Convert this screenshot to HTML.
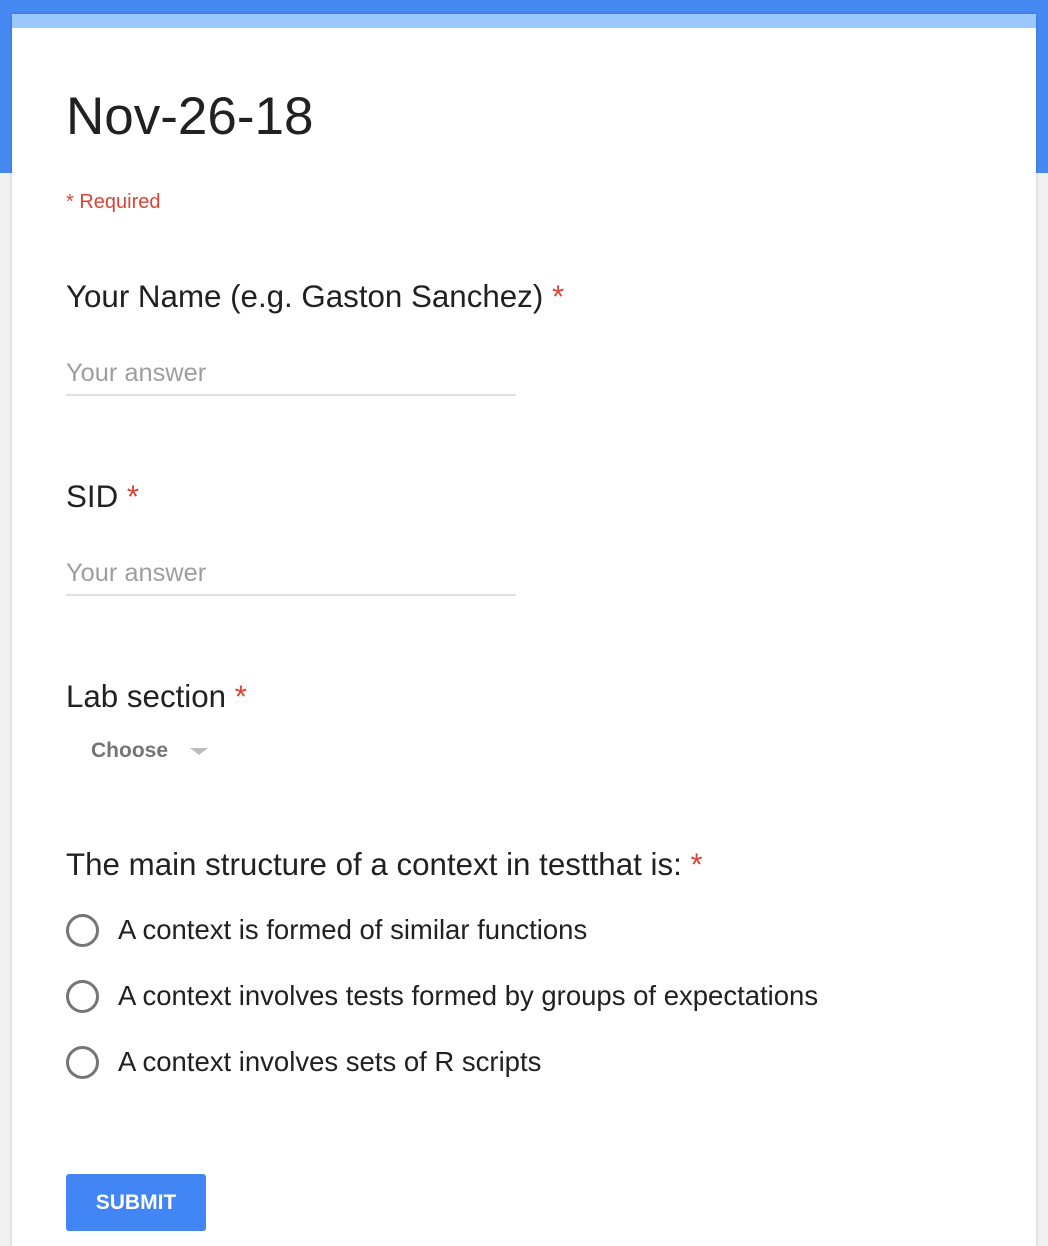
<!DOCTYPE html>
<html><head><style>
html,body{margin:0;height:1246px;overflow:hidden}
body{width:1048px;background:#f0f0f0;font-family:"Liberation Sans",Arial,sans-serif;position:relative}
.band{position:absolute;left:0;top:0;width:1048px;height:173px;background:#4688f1}
.card{position:absolute;left:12px;top:14px;width:1024px;height:1232px;background:#fff;border-top:14px solid #9bc8fc;box-shadow:0 0 3px rgba(0,0,0,.2);box-sizing:border-box}
.t{position:absolute;white-space:nowrap;color:#212121}
.r{color:#db4437}
.line{position:absolute;left:66px;width:450px;height:2px;background:#e0e0e0}
.ph{position:absolute;left:66px;font-size:25.4px;color:#9e9e9e}
.rad{position:absolute;left:66px;width:27px;height:27px;border:3px solid #757575;border-radius:50%}
.opt{position:absolute;left:118px;font-size:27.5px;color:#212121;white-space:nowrap}
</style></head><body>
<div class="band"></div>
<div class="card"></div>
<div class="t" style="left:66px;top:86px;font-size:53px">Nov-26-18</div>
<div class="t r" style="left:66px;top:191px;font-size:20px">* Required</div>
<div class="t" style="left:66px;top:279px;font-size:31.3px">Your Name (e.g. Gaston Sanchez) <span class="r">*</span></div>
<div class="ph" style="top:359px">Your answer</div>
<div class="line" style="top:394px"></div>
<div class="t" style="left:66px;top:479px;font-size:31.3px">SID <span class="r">*</span></div>
<div class="ph" style="top:559px">Your answer</div>
<div class="line" style="top:594px"></div>
<div class="t" style="left:66px;top:679px;font-size:31.3px">Lab section <span class="r">*</span></div>
<div class="t" style="left:91px;top:739px;font-size:21px;color:#757575;font-weight:bold">Choose</div>
<div style="position:absolute;left:190px;top:748px;width:0;height:0;border-left:9px solid transparent;border-right:9px solid transparent;border-top:7px solid #bdbdbd"></div>
<div class="t" style="left:66px;top:847px;font-size:31.3px">The main structure of a context in testthat is: <span class="r">*</span></div>
<div class="rad" style="top:914px"></div><div class="opt" style="top:914px">A context is formed of similar functions</div>
<div class="rad" style="top:980px"></div><div class="opt" style="top:980px">A context involves tests formed by groups of expectations</div>
<div class="rad" style="top:1046px"></div><div class="opt" style="top:1046px">A context involves sets of R scripts</div>
<div style="position:absolute;left:66px;top:1174px;width:140px;height:57px;background:#4285f4;border-radius:3px;color:#fff;font-weight:bold;font-size:21px;text-align:center;line-height:57px">SUBMIT</div>
</body></html>
